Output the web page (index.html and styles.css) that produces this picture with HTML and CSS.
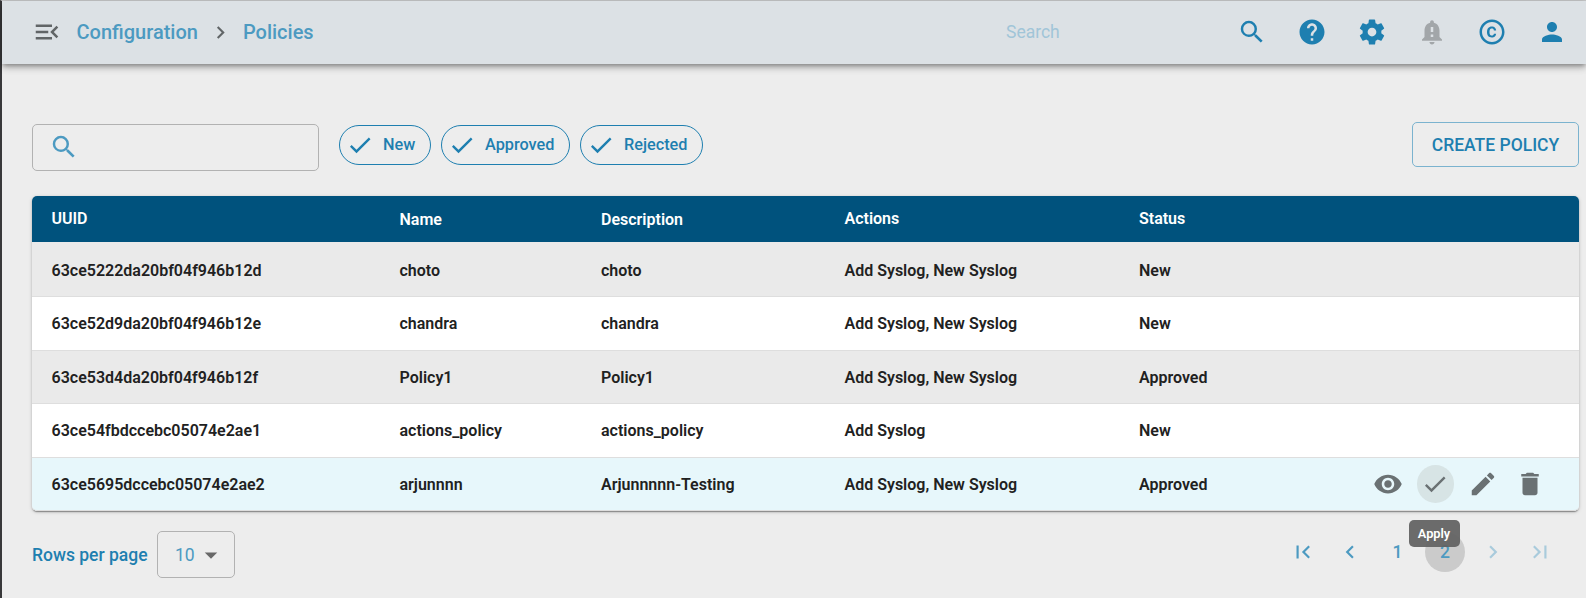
FILE: index.html
```html
<!DOCTYPE html>
<html lang="en">
<head>
<meta charset="utf-8">
<title>Policies</title>
<link rel="stylesheet" href="styles.css">
</head>
<body>
<svg class="sprite" aria-hidden="true">
  <symbol id="i-search" viewBox="0 0 24 24"><path d="M15.5 14h-.79l-.28-.27A6.471 6.471 0 0 0 16 9.5 6.5 6.5 0 1 0 9.5 16c1.61 0 3.09-.59 4.23-1.57l.27.28v.79l5 4.99L20.49 19l-4.99-5zm-6 0C7.01 14 5 11.99 5 9.5S7.01 5 9.5 5 14 7.01 14 9.5 11.99 14 9.5 14z"/></symbol>
  <symbol id="i-menu" viewBox="0 0 24 24"><path d="M3 18h13v-2H3v2zM3 13h10v-2H3v2zm0-7v2h13V6H3zm18 9.59L17.42 12 21 8.41 19.59 7l-5 5 5 5L21 15.59z"/></symbol>
  <symbol id="i-right" viewBox="0 0 24 24"><path d="M10 6L8.59 7.41 13.17 12l-4.58 4.59L10 18l6-6z"/></symbol>
  <symbol id="i-left" viewBox="0 0 24 24"><path d="M15.41 7.41L14 6l-6 6 6 6 1.41-1.41L10.83 12z"/></symbol>
  <symbol id="i-first" viewBox="0 0 24 24"><path d="M18.41 16.59L13.82 12l4.59-4.59L17 6l-6 6 6 6zM6 6h2v12H6z"/></symbol>
  <symbol id="i-last" viewBox="0 0 24 24"><path d="M5.59 7.41L10.18 12l-4.59 4.59L7 18l6-6-6-6zM16 6h2v12h-2z"/></symbol>
  <symbol id="i-help" viewBox="0 0 24 24"><path d="M12 2C6.48 2 2 6.48 2 12s4.48 10 10 10 10-4.480 10-10S17.520 2 12 2zm1 17h-2v-2h2v2zm2.070-7.750l-.9.920C13.450 12.900 13 13.500 13 15h-2v-.5c0-1.100.450-2.100 1.170-2.830l1.240-1.260c.370-.360.590-.860.590-1.410 0-1.100-.9-2-2-2s-2 .9-2 2H8c0-2.210 1.790-4 4-4s4 1.790 4 4c0 .880-.360 1.680-.930 2.250z"/></symbol>
  <symbol id="i-gear" viewBox="0 0 24 24"><path d="M19.430 12.980c.040-.320.070-.640.070-.980s-.030-.660-.070-.980l2.110-1.650c.190-.150.240-.420.120-.640l-2-3.460c-.120-.220-.390-.300-.610-.220l-2.490 1c-.520-.400-1.080-.730-1.690-.980l-.380-2.650C14.460 2.180 14.250 2 14 2h-4c-.250 0-.460.180-.490.420l-.380 2.650c-.610.250-1.170.590-1.690.980l-2.490-1c-.230-.090-.490 0-.610.220l-2 3.460c-.130.220-.070.490.120.640l2.110 1.650c-.040.320-.070.650-.070.980s.030.660.070.980l-2.110 1.650c-.190.150-.240.420-.120.640l2 3.460c.120.220.390.300.610.220l2.490-1c.520.400 1.080.730 1.690.980l.380 2.650c.030.240.240.420.490.420h4c.250 0 .460-.180.490-.420l.380-2.650c.610-.250 1.170-.590 1.690-.980l2.490 1c.230.090.490 0 .610-.220l2-3.460c.120-.220.070-.490-.120-.640l-2.110-1.650zM12 15.500c-1.930 0-3.500-1.570-3.500-3.500s1.570-3.500 3.500-3.500 3.500 1.570 3.500 3.500-1.570 3.500-3.500 3.500z"/></symbol>
  <symbol id="i-bell" viewBox="0 0 24 24"><path d="M18 16v-5c0-3.070-1.640-5.640-4.500-6.320V4c0-.830-.670-1.500-1.500-1.500s-1.500.670-1.500 1.500v.680C7.630 5.360 6 7.920 6 11v5l-2 2v1h16v-1l-2-2zm-5 0h-2v-2h2v2zm0-4h-2V8h2v4zm-1 10c1.100 0 2-.9 2-2h-4c0 1.100.890 2 2 2z"/></symbol>
  <symbol id="i-copy" viewBox="0 0 24 24"><path d="M10.080 10.860c.050-.330.160-.620.300-.870s.340-.460.590-.620c.240-.150.540-.220.910-.230.230.010.440.050.630.130.200.090.380.210.520.360s.250.330.340.530.130.420.140.640h1.790c-.020-.470-.110-.900-.280-1.290s-.400-.730-.700-1.010-.660-.500-1.080-.660-.880-.230-1.390-.230c-.650 0-1.220.110-1.700.340s-.880.530-1.200.920-.560.840-.710 1.360S8 11.290 8 11.870v.270c0 .580.080 1.120.230 1.640s.390.970.710 1.350.720.690 1.200.910 1.050.340 1.700.340c.470 0 .910-.080 1.320-.230s.770-.360 1.080-.630.560-.580.740-.940.290-.740.300-1.150h-1.790c-.010.210-.060.400-.150.580s-.210.330-.360.460-.320.230-.520.300c-.190.070-.390.090-.6.100-.360-.010-.660-.080-.890-.230-.250-.160-.450-.370-.590-.620s-.250-.550-.300-.880-.080-.670-.080-1v-.270c0-.350.030-.680.080-1.010zM12 2C6.480 2 2 6.480 2 12s4.480 10 10 10 10-4.480 10-10S17.520 2 12 2zm0 18c-4.410 0-8-3.590-8-8s3.590-8 8-8 8 3.590 8 8-3.590 8-8 8z"/></symbol>
  <symbol id="i-person" viewBox="0 0 24 24"><path d="M12 12c2.210 0 4-1.790 4-4s-1.790-4-4-4-4 1.790-4 4 1.790 4 4 4zm0 2c-2.670 0-8 1.340-8 4v2h16v-2c0-2.660-5.330-4-8-4z"/></symbol>
  <symbol id="i-check" viewBox="0 0 24 24"><path d="M9 16.170L4.830 12l-1.420 1.410L9 19 21 7l-1.410-1.410z"/></symbol>
  <symbol id="i-eye" viewBox="0 0 24 24"><path d="M12 4.500C7 4.500 2.730 7.610 1 12c1.730 4.390 6 7.500 11 7.500s9.270-3.110 11-7.500c-1.730-4.390-6-7.500-11-7.500zM12 17c-2.760 0-5-2.240-5-5s2.240-5 5-5 5 2.240 5 5-2.240 5-5 5zm0-8c-1.660 0-3 1.340-3 3s1.340 3 3 3 3-1.340 3-3-1.340-3-3-3z"/></symbol>
  <symbol id="i-edit" viewBox="0 0 24 24"><path d="M3 17.250V21h3.750L17.810 9.940l-3.750-3.750L3 17.250zM20.710 7.040c.390-.390.390-1.020 0-1.410l-2.340-2.340c-.390-.390-1.020-.390-1.410 0l-1.830 1.830 3.750 3.750 1.830-1.830z"/></symbol>
  <symbol id="i-trash" viewBox="0 0 24 24"><path d="M6 19c0 1.100.9 2 2 2h8c1.100 0 2-.9 2-2V7H6v12zM19 4h-3.500l-1-1h-5l-1 1H5v2h14V4z"/></symbol>
  <symbol id="i-drop" viewBox="0 0 24 24"><path d="M7 10l5 5 5-5z"/></symbol>
</svg>
<div class="app">
  <header class="topbar">
    <svg class="icon menu"><use href="#i-menu"/></svg>
    <nav class="crumbs">
      <a>Configuration</a>
      <svg class="icon sep"><use href="#i-right"/></svg>
      <a>Policies</a>
    </nav>
    <span class="global-search">Search</span>
    <div class="tools">
      <svg class="icon"><use href="#i-search"/></svg>
      <svg class="icon"><use href="#i-help"/></svg>
      <svg class="icon"><use href="#i-gear"/></svg>
      <svg class="icon muted"><use href="#i-bell"/></svg>
      <svg class="icon"><use href="#i-copy"/></svg>
      <svg class="icon"><use href="#i-person"/></svg>
    </div>
  </header>
  <main class="content">
    <div class="filters">
      <div class="search-box"><svg class="icon"><use href="#i-search"/></svg></div>
      <div class="chips">
        <span class="chip new"><svg class="icon"><use href="#i-check"/></svg><span>New</span></span>
        <span class="chip approved"><svg class="icon"><use href="#i-check"/></svg><span>Approved</span></span>
        <span class="chip rejected"><svg class="icon"><use href="#i-check"/></svg><span>Rejected</span></span>
      </div>
      <button class="create">CREATE POLICY</button>
    </div>
    <section class="table">
      <div class="row head"><span>UUID</span><span class="sortable">Name</span><span class="sortable">Description</span><span>Actions</span><span>Status</span></div>
      <div class="row odd first"><span>63ce5222da20bf04f946b12d</span><span>choto</span><span>choto</span><span>Add Syslog, New Syslog</span><span>New</span></div>
      <div class="row"><span>63ce52d9da20bf04f946b12e</span><span>chandra</span><span>chandra</span><span>Add Syslog, New Syslog</span><span>New</span></div>
      <div class="row odd short"><span>63ce53d4da20bf04f946b12f</span><span>Policy1</span><span>Policy1</span><span>Add Syslog, New Syslog</span><span>Approved</span></div>
      <div class="row"><span>63ce54fbdccebc05074e2ae1</span><span>actions_policy</span><span>actions_policy</span><span>Add Syslog</span><span>New</span></div>
      <div class="row hover"><span>63ce5695dccebc05074e2ae2</span><span>arjunnnn</span><span>Arjunnnnn-Testing</span><span>Add Syslog, New Syslog</span><span>Approved</span>
        <div class="actions">
          <span class="act"><svg class="icon"><use href="#i-eye"/></svg></span>
          <span class="act active"><svg class="icon"><use href="#i-check"/></svg><span class="tooltip">Apply</span></span>
          <span class="act"><svg class="icon"><use href="#i-edit"/></svg></span>
          <span class="act"><svg class="icon"><use href="#i-trash"/></svg></span>
        </div>
      </div>
    </section>
    <footer class="footer">
      <span class="rpp">Rows per page</span>
      <div class="select"><span>10</span><svg class="icon"><use href="#i-drop"/></svg></div>
      <div class="pager">
        <span class="page"><svg class="icon"><use href="#i-first"/></svg></span>
        <span class="page"><svg class="icon"><use href="#i-left"/></svg></span>
        <span class="page">1</span>
        <span class="page current">2</span>
        <span class="page off"><svg class="icon"><use href="#i-right"/></svg></span>
        <span class="page off"><svg class="icon"><use href="#i-last"/></svg></span>
      </div>
    </footer>
  </main>
</div>
</body>
</html>
```

FILE: styles.css
```css
* { box-sizing: border-box; }
body {
  margin: 0;
  width: 1586px;
  height: 598px;
  overflow: hidden;
  background: #ededed;
  font-family: Roboto, "Liberation Sans", sans-serif;
  color: #212121;
}
.sprite { display: none; }
.icon { display: block; flex: none; width: 30px; height: 30px; fill: currentColor; }
.app {
  height: 598px;
  border-top: 1px solid #c8c9ca;
  border-left: 2px solid #38383a;
}
.topbar {
  height: 63px;
  display: flex;
  align-items: center;
  padding: 0 19px 1px 30px;
  background: #dce1e5;
  box-shadow: 0 2px 5px -1px rgba(0,0,0,.4), 0 5px 6px rgba(0,0,0,.12), 0 1px 11px rgba(0,0,0,.1);
}
.menu { color: #616567; }
.crumbs {
  display: flex;
  align-items: center;
  margin-left: 14.5px;
  font-size: 20px;
  font-weight: 500;
  color: #4c9ac1;
}
.sep { width: 25px; height: 25px; margin: 0 10px; color: #616567; }
.global-search {
  margin-left: auto;
  width: 231px;
  font-size: 17.5px;
  font-weight: 400;
  color: #a1c5d8;
}
.tools { display: flex; gap: 30px; color: #1e7fb0; }
.muted { color: #a2a6a9; }
.content { padding: 58px 7px 0 30px; }
.filters { display: flex; height: 49px; align-items: flex-start; }
.search-box {
  width: 287px;
  height: 47px;
  margin-top: 2px;
  padding: 7px 0 0 16px;
  border: 1px solid #b2b2b2;
  border-radius: 5px;
  color: #4c9ac1;
}
.chips { display: flex; gap: 10px; margin: 3px 0 0 20px; }
.chip {
  height: 40px;
  display: flex;
  align-items: center;
  gap: 9px;
  padding-left: 6px;
  border: 1px solid #1e7fb0;
  border-radius: 20px;
  color: #1e7fb0;
  font-size: 16.25px;
  font-weight: 500;
  padding-bottom: 1px;
}
.chip .icon { width: 28px; height: 28px; margin-top: 1px; }
.chip.new { width: 92px; }
.chip.approved { width: 129px; }
.chip.rejected { width: 123px; }
.create {
  margin-left: auto;
  width: 167px;
  height: 45px;
  padding: 0;
  border: 1px solid #7bb3cf;
  border-radius: 5px;
  background: none;
  color: #1e7fb0;
  font: 500 17.5px Roboto, "Liberation Sans", sans-serif;
}
.table {
  margin-top: 25px;
  border-radius: 5px;
  background: #fff;
  box-shadow: 0 2px 1px -1px rgba(0,0,0,.25), 0 1px 2px rgba(0,0,0,.2), 0 1px 4px rgba(0,0,0,.14);
}
.row {
  position: relative;
  height: 54px;
  display: grid;
  grid-template-columns: 348px 201.5px 243.5px 294.5px 1fr;
  align-items: center;
  padding: 0 0 0 19.5px;
  border-bottom: 1px solid #dedede;
  font-size: 16px;
  font-weight: 600;
}
.row.head {
  height: 46px;
  padding-bottom: 2px;
  border: 0;
  border-radius: 5px 5px 0 0;
  background: #00527d;
  color: #fff;
}
.sortable { padding-top: 2px; }
.row.odd { background: #eaeaea; }
.row.first { height: 55px; padding-top: 2px; }
.row.short { height: 53px; }
.row.hover { height: 53px; padding-top: 1px; border-radius: 0 0 5px 5px; background: #e7f7fb; }
.actions {
  position: absolute;
  right: 30px;
  top: 7px;
  display: flex;
  gap: 10px;
  color: #6a7173;
}
.act {
  position: relative;
  width: 37.5px;
  height: 38px;
  display: grid;
  place-items: center;
  border-radius: 50%;
}
.act.active { background: #d7e4e5; }
.act.active .icon { width: 28px; height: 28px; }
.tooltip {
  position: absolute;
  z-index: 2;
  top: 55px;
  left: -8px;
  width: 51px;
  height: 27px;
  border-radius: 5px;
  background: rgba(97,97,97,.93);
  color: #fff;
  font-size: 12.8px;
  line-height: 27px;
  text-align: center;
}
.footer { display: flex; align-items: center; height: 47px; margin-top: 20px; }
.rpp { width: 125px; color: #1e7fb0; font-size: 17.5px; font-weight: 500; }
.select {
  width: 78px;
  height: 47px;
  display: flex;
  align-items: center;
  padding-left: 17px;
  border: 1px solid #b2b2b2;
  border-radius: 5px;
  color: #4c9ac1;
  font-size: 17.5px;
}
.select .icon { margin-left: 1px; color: #686868; }
.pager {
  display: flex;
  gap: 7.5px;
  margin: -5px 19px 0 auto;
  color: #4c9ac1;
  font-size: 17.5px;
  font-weight: 500;
}
.page { width: 40px; height: 40px; display: grid; place-items: center; border-radius: 50%; }
.page .icon { width: 26px; height: 26px; }
.page.current { background: #cbcbcb; }
.page.off { color: #a9cbdc; }
```
